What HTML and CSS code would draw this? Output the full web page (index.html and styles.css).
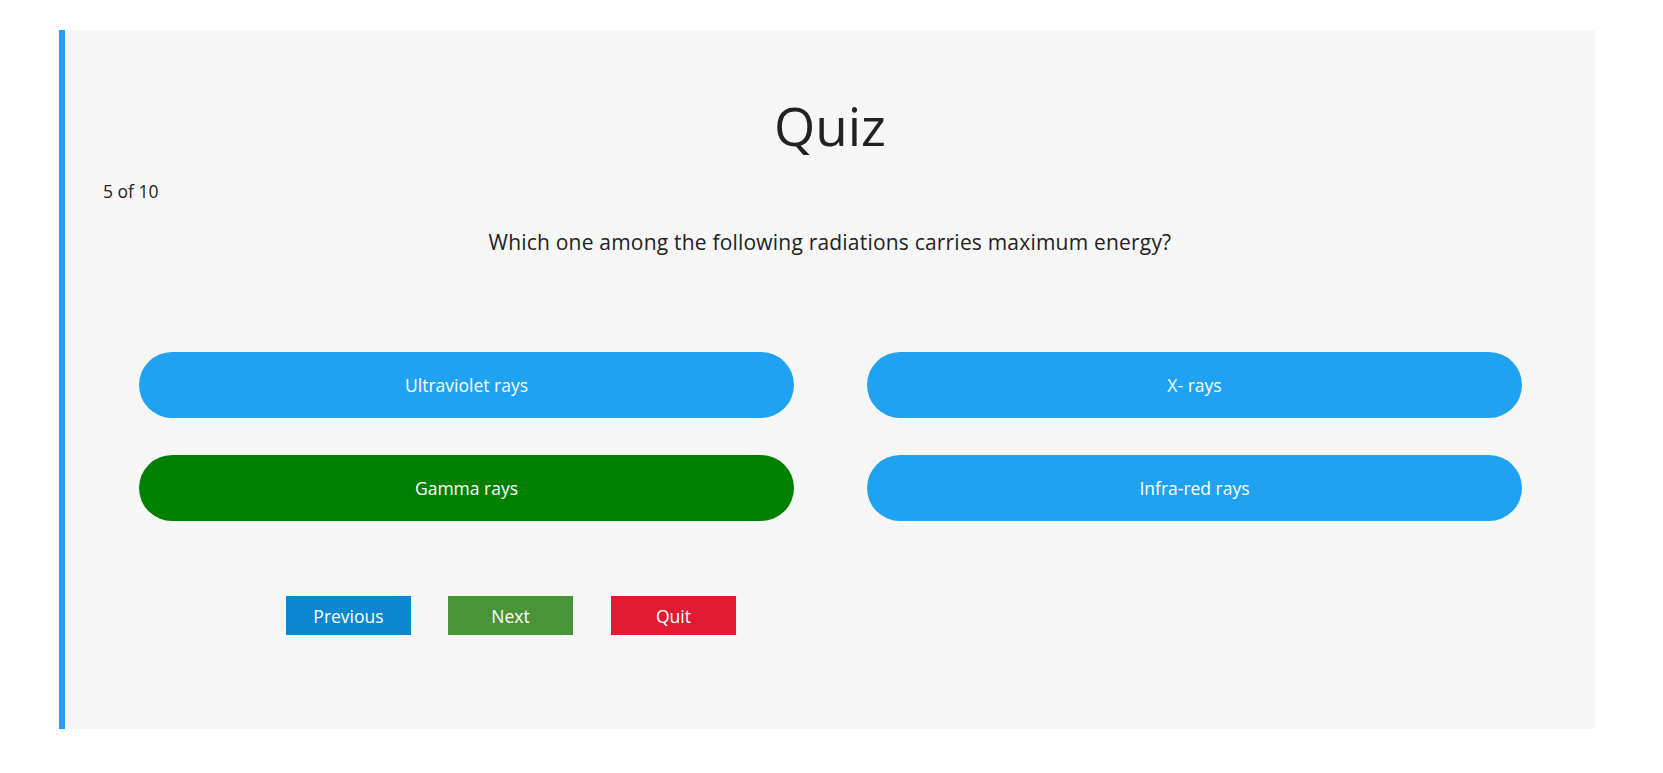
FILE: index.html
```html
<!DOCTYPE html>
<html lang="en">
<head>
<meta charset="utf-8">
<title>Quiz</title>
<link rel="stylesheet" href="styles.css">
</head>
<body>
<div class="quiz-card">
  <h1 class="quiz-title">Quiz</h1>
  <div class="quiz-count">5 of 10</div>
  <p class="quiz-question">Which one among the following radiations carries maximum energy?</p>
  <div class="answers">
    <button class="answer">Ultraviolet rays</button>
    <button class="answer">X- rays</button>
    <button class="answer answer-correct">Gamma rays</button>
    <button class="answer">Infra-red rays</button>
  </div>
  <div class="nav">
    <button class="nav-btn nav-prev">Previous</button>
    <button class="nav-btn nav-next">Next</button>
    <button class="nav-btn nav-quit">Quit</button>
  </div>
</div>
</body>
</html>
```

FILE: styles.css
```css
* { box-sizing: border-box; }

body {
  margin: 0;
  background: #ffffff;
  font-family: "Open Sans", "Noto Sans", sans-serif;
  color: #222222;
}

.quiz-card {
  margin: 30px 0 0 59px;
  width: 1536px;
  height: 699px;
  background: #f7f7f7;
  border-left: 6px solid #1fa2f2;
  padding-top: 64px;
}

.quiz-title {
  margin: 0;
  font-size: 53px;
  line-height: 64px;
  font-weight: 400;
  text-align: center;
  color: #222222;
}

.quiz-count {
  margin-top: 21px;
  padding-left: 38px;
  font-size: 17.5px;
  line-height: 24px;
}

.quiz-question {
  margin: 25px 0 0;
  font-size: 21px;
  line-height: 28px;
  letter-spacing: 0.2px;
  text-align: center;
}

.answers {
  margin-top: 96px;
  padding: 0 74px;
  display: grid;
  grid-template-columns: 655px 655px;
  column-gap: 73px;
  row-gap: 37px;
}

.answer {
  height: 66px;
  border: none;
  border-radius: 33px;
  background: #1fa2f2;
  color: #ffffff;
  font-family: inherit;
  font-size: 17.5px;
  cursor: pointer;
}

.answer-correct {
  background: #008000;
}

.nav {
  margin-top: 75px;
  padding-left: 221px;
  display: flex;
  gap: 37px;
}

.nav-btn {
  width: 125px;
  height: 39px;
  border: none;
  color: #ffffff;
  font-family: inherit;
  font-size: 17.5px;
  cursor: pointer;
}

.nav-next { margin-right: 1px; }
.nav-prev { background: #0b86d1; }
.nav-next { background: #4a9438; }
.nav-quit { background: #e01a32; }
```
